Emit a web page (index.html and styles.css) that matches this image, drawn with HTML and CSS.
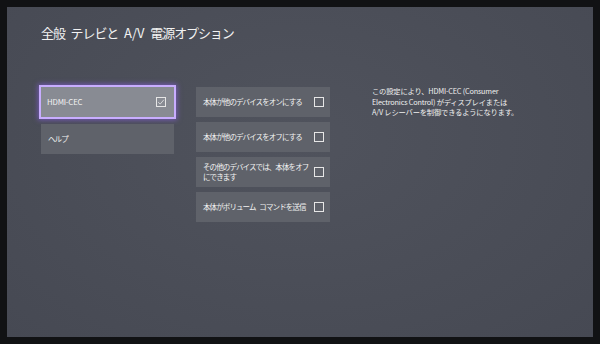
FILE: index.html
```html
<!DOCTYPE html>
<html lang="ja">
<head>
    <meta charset="UTF-8">
    <meta name="viewport" content="width=device-width, initial-scale=1.0">
    <title>電源オプション</title>
    <link rel="stylesheet" href="styles.css">
</head>
<body>
    <div class="screen">
        <h1 class="title">全般 テレビと <span class="latin">A/V</span> 電源オプション</h1>
        <div class="content">
            <div class="menu">
                <div class="item selected">
                    <span>HDMI-CEC</span>
                    <span class="check checked">
                        <svg viewBox="0 0 10 10" width="8" height="8"><path d="M1.5 5.2 L4 7.6 L8.6 2.2" fill="none" stroke="#f4f4f4" stroke-width="0.9"/></svg>
                    </span>
                </div>
                <div class="item"><span>ヘルプ</span></div>
            </div>
            <div class="options">
                <div class="item"><span>本体が他のデバイスをオンにする</span><span class="check"></span></div>
                <div class="item"><span>本体が他のデバイスをオフにする</span><span class="check"></span></div>
                <div class="item"><span>その他のデバイスでは、本体をオフ<br>にできます</span><span class="check"></span></div>
                <div class="item"><span>本体がボリューム コマンドを送信</span><span class="check"></span></div>
            </div>
            <p class="desc">この設定により、HDMI-CEC (Consumer<br>Electronics Control) がディスプレイまたは<br>A/V レシーバーを制御できるようになります。</p>
        </div>
    </div>
</body>
</html>
```

FILE: styles.css
```css
body {
    margin: 0;
    background-color: #111214;
    font-family: "Noto Sans CJK JP", "Noto Sans", sans-serif;
    color: #f2f2f2;
}
.screen {
    margin: 7px;
    height: 330px;
    box-sizing: border-box;
    padding: 16px 0 0 34px;
    background: radial-gradient(ellipse at 50% 40%, #50535d 0%, #4a4d57 60%, #464953 100%);
}
.title {
    margin: 0;
    font-size: 13px;
    font-weight: normal;
    letter-spacing: -1.1px;
    word-spacing: 4px;
    line-height: 20px;
}
.title .latin {
    letter-spacing: 0;
}
.content {
    display: flex;
    margin-top: 44px;
}
.menu, .options {
    display: flex;
    flex-direction: column;
    gap: 5px;
}
.menu {
    width: 133px;
}
.options {
    width: 134px;
    margin-left: 22px;
}
.item {
    display: flex;
    align-items: center;
    justify-content: space-between;
    height: 30px;
    box-sizing: border-box;
    padding: 0 6px 0 7px;
    background-color: #5f626a;
    font-size: 7.5px;
    line-height: 10px;
    letter-spacing: -0.9px;
    word-spacing: 3px;
    white-space: nowrap;
}
.selected {
    height: 34px;
    margin: -2px -2px 0 -2px;
    padding: 0 8px 0 6px;
    background-color: #888b93;
    border: 2px solid #c8adff;
    box-shadow: 0 0 5px 1px rgba(150, 100, 255, 0.55);
    letter-spacing: -0.2px;
    font-size: 7.8px;
}
.check {
    flex: none;
    display: flex;
    align-items: center;
    justify-content: center;
    width: 10px;
    height: 10px;
    box-sizing: border-box;
    border: 1px solid #e6e6e6;
}
.desc {
    margin: -1px 0 0 42px;
    font-size: 7.3px;
    line-height: 10.5px;
    letter-spacing: -0.2px;
    color: #f0f0f0;
}
```
